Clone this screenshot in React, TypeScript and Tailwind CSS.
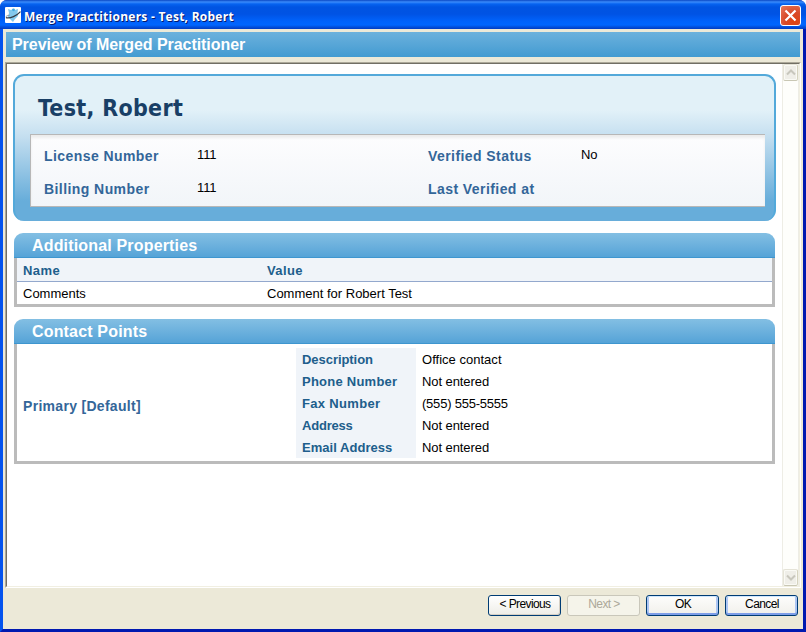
import type { ReactNode } from "react";

const contact = [
  { label: "Description", value: "Office contact", ls: "tracking-[-0.05px]", vs: "tracking-[0.02px]" },
  { label: "Phone Number", value: "Not entered", ls: "tracking-[0.24px]", vs: "tracking-[-0.08px]" },
  { label: "Fax Number", value: "(555) 555-5555", ls: "tracking-[0.32px]", vs: "tracking-[-0.22px]" },
  { label: "Address", value: "Not entered", ls: "tracking-[-0.2px]", vs: "tracking-[-0.08px]" },
  { label: "Email Address", value: "Not entered", ls: "tracking-[0.04px]", vs: "tracking-[-0.08px]" },
];

function AppIcon() {
  return (
    <svg width="16" height="16" viewBox="0 0 16 16" className="shrink-0">
      <rect width="16" height="16" rx="1" fill="#fff" />
      <path d="M3 2l3 1 2-1 2 1 3-1-.5 4 .5 3-3 3-2 3-3-3-2-2 1-4z" fill="#83c9ed" />
      <circle cx="8.5" cy="2.8" r="1.4" fill="#42a9e0" />
      <path d="M1 10.6C5 12 12 8.5 15.5 4.6" fill="none" stroke="#343b43" strokeWidth="1.2" />
      <path d="M.6 10c1-1.2 2.4-1.6 4-1.8" fill="none" stroke="#687580" strokeWidth=".8" />
    </svg>
  );
}

function ScrollButton({ down = false }: { down?: boolean }) {
  return (
    <div className="mx-auto flex h-[17px] w-[15px] items-center justify-center rounded-[2px] border border-[#e5e3d7] border-r-[#d5d3bf] border-b-[#c9c7b4] bg-[#efeee8] shadow-[inset_0_0_0_1px_#fafaf5]">
      <svg width="10" height="7" viewBox="0 0 10 7" className={down ? "rotate-180" : ""}>
        <path d="M1 5.5l4-4 4 4" fill="none" stroke="#c8c7bd" strokeWidth="2" />
      </svg>
    </div>
  );
}

function SectionTitle({ children }: { children: ReactNode }) {
  return (
    <h2 className="h-[25px] rounded-t-[9px] border-b border-[#3e96cf] bg-linear-to-b from-[#83bfe3] to-[#55a3d7] pl-[18px] text-[16px] leading-[25px] font-bold tracking-[0.17px] text-white">
      {children}
    </h2>
  );
}

function Field({ label, value }: { label: string; value: string }) {
  return (
    <div className="flex h-[33px] items-start">
      <span className="w-[153px] pt-[3px] text-[14px] leading-[18px] font-bold tracking-[0.43px] text-[#336699]">{label}</span>
      <span className="pt-[2px] text-[13px] leading-[18px] tracking-[-0.1px] text-black">{value}</span>
    </div>
  );
}

function Button({ children, kind = "normal" }: { children: ReactNode; kind?: "normal" | "blue" | "disabled" }) {
  const look = {
    normal: "border-[#003c74] bg-linear-to-b from-white to-[#eeede7] text-black shadow-[inset_-1px_-1px_0_#d6d0c5]",
    blue: "border-[#003c74] bg-linear-to-b from-[#fdfdfc] to-[#f1f0eb] text-black shadow-[inset_0_-2px_0_#7e9ee8,inset_0_1px_0_#cee7ff,inset_2px_0_0_#adc6f3,inset_-2px_0_0_#adc6f3]",
    disabled: "border-[#c9c7ba] bg-[#f5f4ea] text-[#aca899]",
  }[kind];
  return (
    <button className={`h-[21px] w-[73px] rounded-[3px] border pb-[2px] pl-[1px] text-center text-[12px] leading-[17px] tracking-[-0.6px] ${look}`}>
      {children}
    </button>
  );
}

export default function App() {
  return (
    <div className="flex h-[632px] w-[806px] flex-col overflow-hidden bg-white font-['Liberation_Sans',Arial,sans-serif]">
      <div className="flex h-full flex-col overflow-hidden rounded-t-[7px] bg-[#0a2fd0]">
        <header className="flex h-[29px] shrink-0 items-center bg-[linear-gradient(to_bottom,#0a48c4_0,#3a8bfb_2px,#0663f0_4px,#0054e2_7px,#0053e4_14px,#0062fb_21px,#0066ff_25px,#0350dc_27px,#003cc5_29px)] pt-[1px] pr-[5px] pl-[5px]">
          <AppIcon />
          <h1 className="ml-[3px] flex-1 pt-[3px] font-['Open_Sans',sans-serif] text-[12px] leading-[16px] font-bold tracking-[0.25px] whitespace-pre text-white [text-shadow:1px_1px_0_#06196b]">Merge Practitioners - Test, Robert</h1>
          <button className="flex h-[21px] w-[21px] items-center justify-center rounded-[3px] border border-white bg-[radial-gradient(circle_at_70%_80%,#e04310_0%,#d84a28_45%,#e8795d_100%)]">
            <svg width="13" height="13" viewBox="0 0 13 13">
              <path d="M1.5 1.5l10 10M11.5 1.5l-10 10" stroke="white" strokeWidth="2.2" />
            </svg>
          </button>
        </header>
        <div className="flex min-h-0 flex-1 border-x-[3px] border-b-[3px] border-r-[#0019b0] border-b-[#0019b0] border-l-[#0453ee]">
          <div className="flex min-w-0 flex-1 flex-col bg-[#ece9d8]">
            <div className="mx-[3px] mt-[3px] h-[25px] shrink-0 bg-linear-to-b from-[#6bb1dd] to-[#429bd1] pl-[6px] text-[16px] leading-[25px] font-bold tracking-[-0.05px] text-white">
              Preview of Merged Practitioner
            </div>
            <div className="mt-[5px] mr-[2px] ml-[2px] flex h-[526px] shrink-0 border border-t-[#aca899] border-r-white border-b-white border-l-[#aca899]">
              <div className="flex flex-1 border border-t-[#716f64] border-r-[#f1efe2] border-b-[#f1efe2] border-l-[#716f64] bg-white">
                <main className="flex-1 pt-[10px] pl-[6px]">
                  <section className="h-[147px] w-[763px] rounded-[11px] border-2 border-b-0 border-[#53a9da] bg-[linear-gradient(to_bottom,#e2f1f8_0,#e2f1f8_34px,#c5dff0_60px,#67adda_125px,#67adda_147px)] pl-[15px]">
                    <h2 className="h-[58px] pt-[14px] pl-[8px] font-['DejaVu_Sans_Condensed','DejaVu_Sans',sans-serif] text-[23px] leading-[36px] font-bold tracking-[0.3px] text-[#193f66]">Test, Robert</h2>
                    <div className="grid h-[73px] w-[735px] grid-cols-[384px_1fr] content-start border-y border-l border-[#b7b7b7] bg-linear-to-b from-[#fdfdfe] to-[#f2f5f9] pt-[9px] pl-[13px] shadow-[inset_0_3px_3px_#ececec]">
                      <Field label="License Number" value="111" />
                      <Field label="Verified Status" value="No" />
                      <Field label="Billing Number" value="111" />
                      <Field label="Last Verified at" value="" />
                    </div>
                  </section>
                  <section className="mt-[12px] ml-px w-[761px]">
                    <SectionTitle>Additional Properties</SectionTitle>
                    <div className="border-x-[3px] border-b-[3px] border-[#bbbbbb] text-[13px]">
                      <div className="flex h-[24px] border-b border-[#93a8cd] bg-[#f0f4f9] pl-[6px] leading-[25px] font-bold tracking-[0.4px] text-[#205e8c]">
                        <span className="w-[244px]">Name</span>
                        <span>Value</span>
                      </div>
                      <div className="flex h-[22px] pl-[6px] leading-[24px] text-black">
                        <span className="w-[244px]">Comments</span>
                        <span>Comment for Robert Test</span>
                      </div>
                    </div>
                  </section>
                  <section className="mt-[12px] ml-px w-[761px]">
                    <SectionTitle>Contact Points</SectionTitle>
                    <div className="flex h-[120px] border-x-[3px] border-b-[3px] border-[#bbbbbb]">
                      <div className="flex w-[279px] items-center pt-[8px] pl-[6px] text-[14px] font-bold tracking-[0.3px] text-[#336699]">Primary [Default]</div>
                      <dl className="pt-[4px] text-[13px] leading-[23px]">
                        {contact.map((row) => (
                          <div key={row.label} className="flex h-[22px]">
                            <dt className={`w-[120px] bg-[#f0f4f9] pl-[6px] font-bold text-[#205e8c] ${row.ls}`}>{row.label}</dt>
                            <dd className={`pl-[6px] text-black ${row.vs}`}>{row.value}</dd>
                          </div>
                        ))}
                      </dl>
                    </div>
                  </section>
                </main>
                <aside className="flex w-[17px] shrink-0 flex-col justify-between border-x border-[#eeede5] bg-[#fefefb]">
                  <ScrollButton />
                  <ScrollButton down />
                </aside>
              </div>
            </div>
            <footer className="mt-[7px] mr-[5px] flex justify-end gap-[6px]">
              <Button>&lt; Previous</Button>
              <Button kind="disabled">Next &gt;</Button>
              <Button kind="blue">OK</Button>
              <Button kind="blue">Cancel</Button>
            </footer>
          </div>
        </div>
      </div>
    </div>
  );
}
